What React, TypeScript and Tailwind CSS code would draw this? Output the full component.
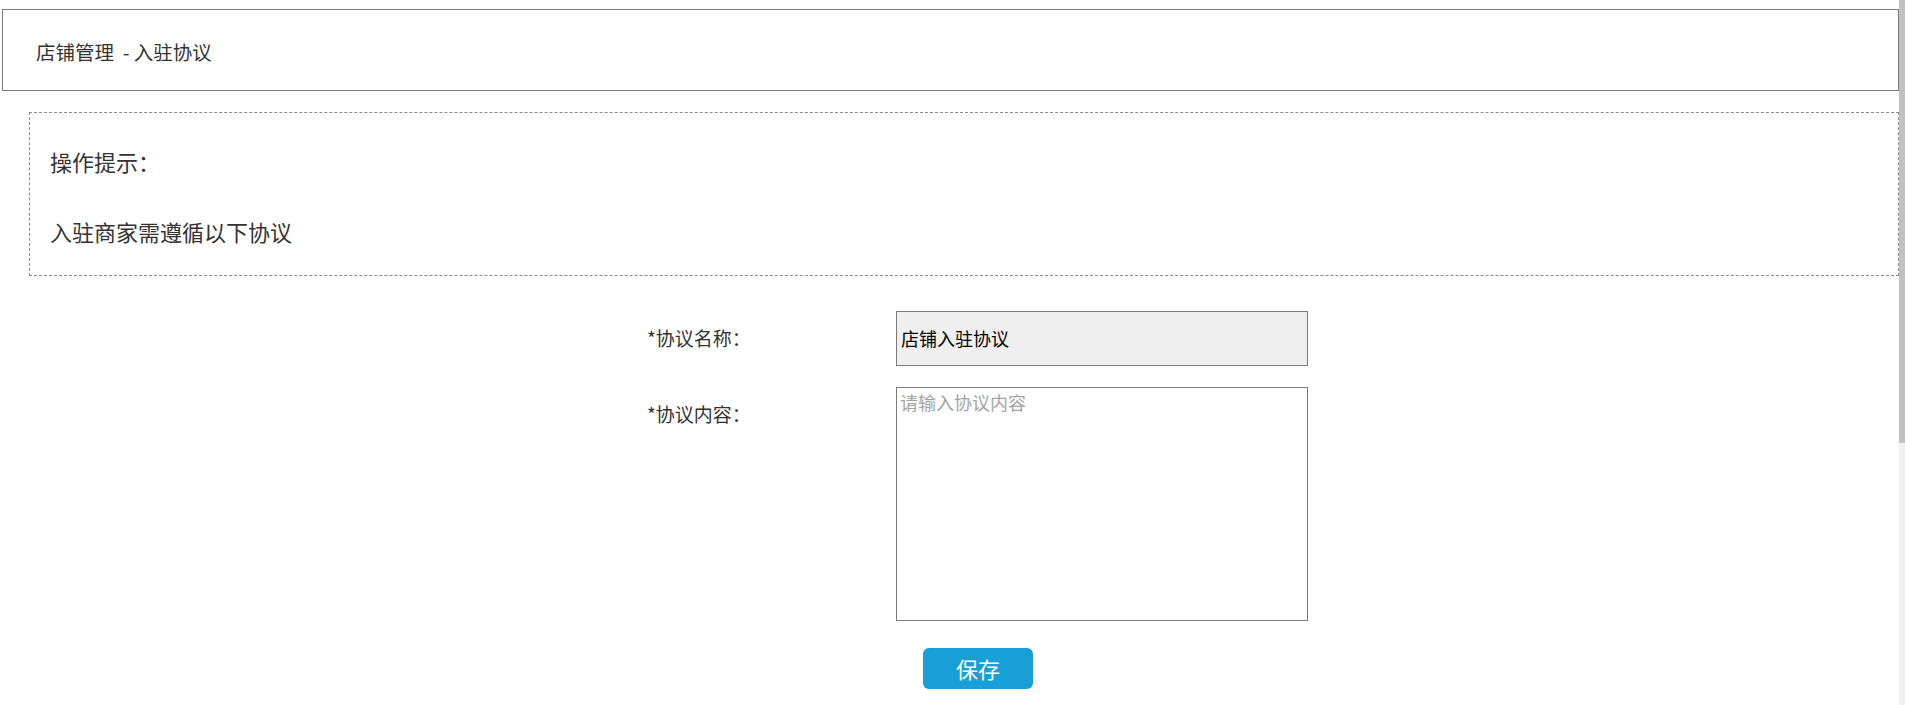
import React from "react";

export default function App() {
  const font = { fontFamily: '"Noto Sans CJK SC", "Noto Sans", sans-serif' };
  return (
    <div className="flex w-full h-[705px] bg-white overflow-hidden" style={font}>
      <div className="flex-1 flex flex-col pt-[9px]">
        <div className="ml-[2px] h-[82px] border border-[#7d7d7d] flex items-center pl-[33px] pt-[3px] text-[19.5px] text-[#333333]">
          <span>店铺管理&nbsp;&nbsp;- 入驻协议</span>
        </div>

        <div className="ml-[29px] mt-[21px] h-[164px] border border-dashed border-[#8a8a8a] pl-[20px] pt-[33px] flex flex-col gap-[40px] text-[#333333]">
          <div className="leading-[30px] text-[22px]">操作提示：</div>
          <div className="leading-[30px] text-[22px]">入驻商家需遵循以下协议</div>
        </div>

        <div className="mt-[35px] pl-[647px] flex flex-col">
          <div className="flex">
            <div className="w-[249px] h-[55px] flex items-center text-[19px] text-[#333333]">*协议名称：</div>
            <div className="w-[412px] h-[55px] border border-[#7a7a7a] bg-[#efefef] flex items-center pl-[4px] text-[18px] text-black">
              店铺入驻协议
            </div>
          </div>
          <div className="flex mt-[21px]">
            <div className="w-[249px] h-[55px] flex items-center text-[19px] text-[#333333]">*协议内容：</div>
            <div className="w-[412px] h-[234px] border border-[#7a7a7a] bg-white pl-[3px] pt-[2px] text-[18px] leading-[24px] text-[#a3a3a3]">
              请输入协议内容
            </div>
          </div>
          <div className="mt-[27px] ml-[276px]">
            <button className="w-[110px] h-[41px] rounded-[6px] bg-[#189fd8] text-white text-[22px] flex items-center justify-center">
              保存
            </button>
          </div>
        </div>
      </div>
      <div className="w-[6px] h-full bg-[#f0f0f0] flex flex-col">
        <div className="h-[443px] bg-[#c1c1c1]"></div>
      </div>
    </div>
  );
}
